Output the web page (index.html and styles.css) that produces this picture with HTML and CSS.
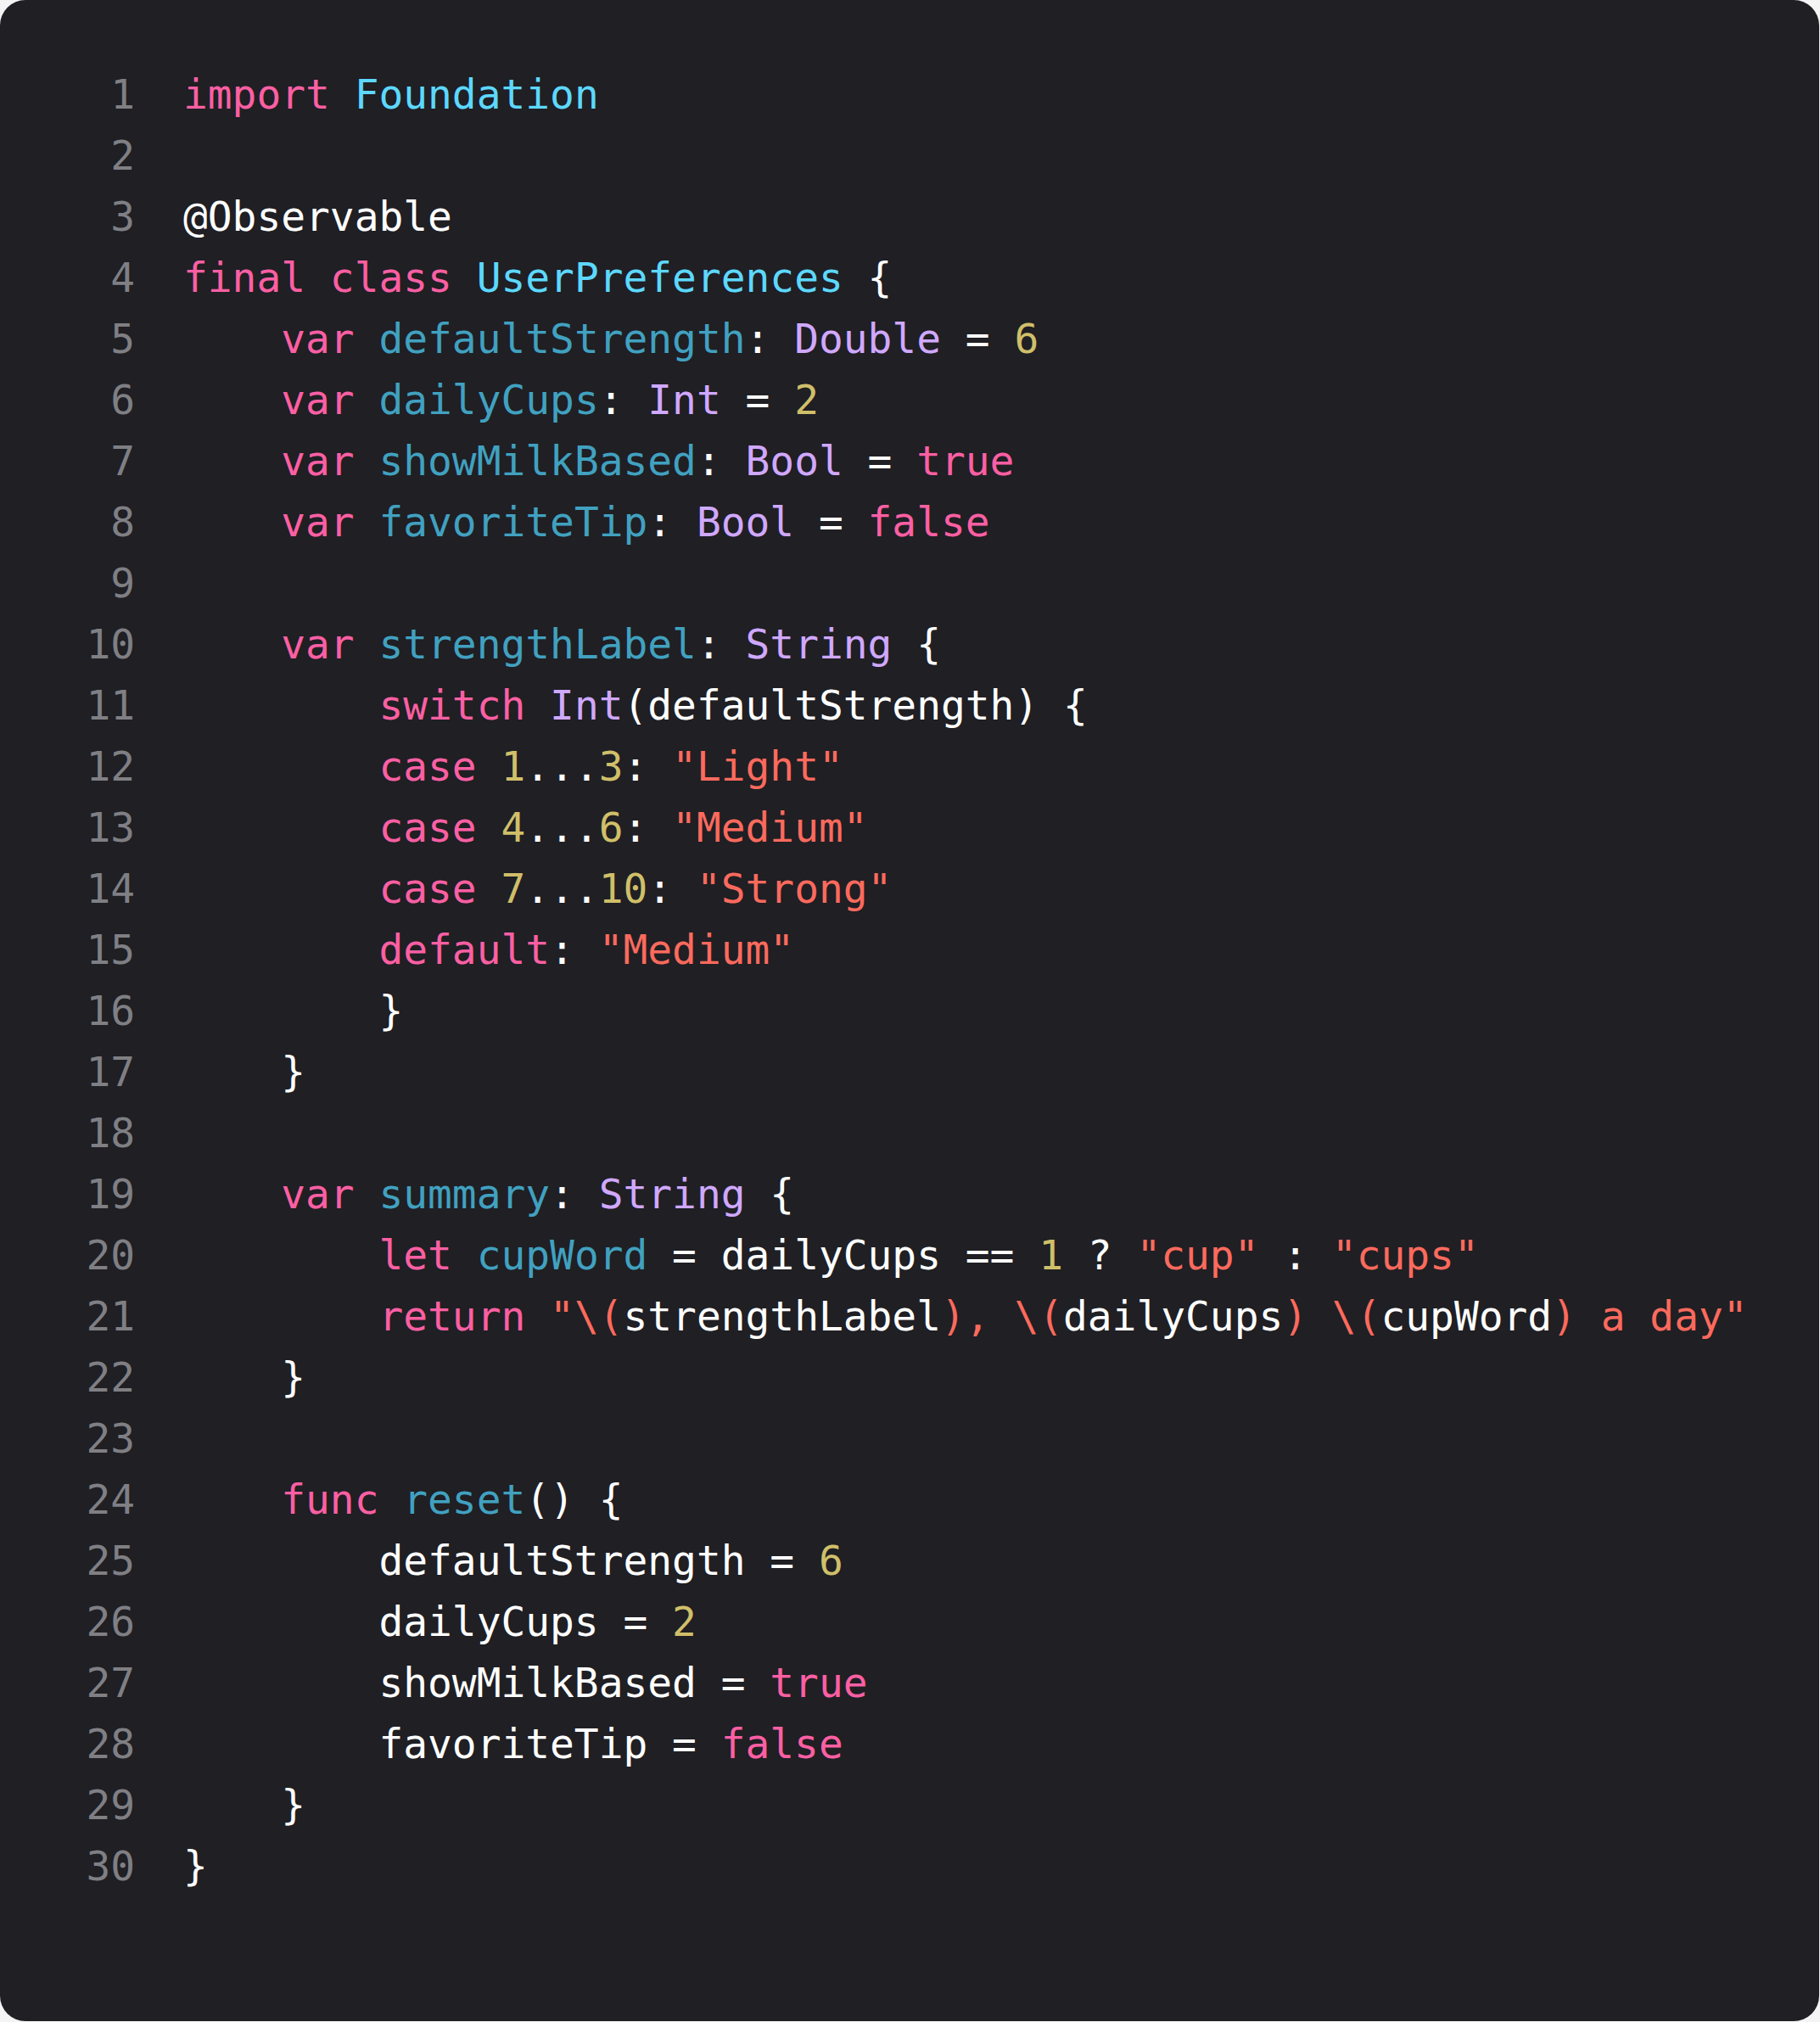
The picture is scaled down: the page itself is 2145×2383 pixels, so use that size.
FILE: index.html
```html
<!DOCTYPE html>
<html lang="en">
<head>
<meta charset="utf-8">
<title>UserPreferences.swift</title>
<link rel="stylesheet" href="styles.css">
</head>
<body>
<div class="card">
<div class="code">
<div class="row"><span class="ln">1</span><span class="src"><span class="kw">import</span> <span class="decl">Foundation</span></span></div>
<div class="row"><span class="ln">2</span><span class="src"></span></div>
<div class="row"><span class="ln">3</span><span class="src">@Observable</span></div>
<div class="row"><span class="ln">4</span><span class="src"><span class="kw">final</span> <span class="kw">class</span> <span class="decl">UserPreferences</span> {</span></div>
<div class="row"><span class="ln">5</span><span class="src">    <span class="kw">var</span> <span class="prop">defaultStrength</span>: <span class="type">Double</span> = <span class="num">6</span></span></div>
<div class="row"><span class="ln">6</span><span class="src">    <span class="kw">var</span> <span class="prop">dailyCups</span>: <span class="type">Int</span> = <span class="num">2</span></span></div>
<div class="row"><span class="ln">7</span><span class="src">    <span class="kw">var</span> <span class="prop">showMilkBased</span>: <span class="type">Bool</span> = <span class="kw">true</span></span></div>
<div class="row"><span class="ln">8</span><span class="src">    <span class="kw">var</span> <span class="prop">favoriteTip</span>: <span class="type">Bool</span> = <span class="kw">false</span></span></div>
<div class="row"><span class="ln">9</span><span class="src"></span></div>
<div class="row"><span class="ln">10</span><span class="src">    <span class="kw">var</span> <span class="prop">strengthLabel</span>: <span class="type">String</span> {</span></div>
<div class="row"><span class="ln">11</span><span class="src">        <span class="kw">switch</span> <span class="type">Int</span>(defaultStrength) {</span></div>
<div class="row"><span class="ln">12</span><span class="src">        <span class="kw">case</span> <span class="num">1</span>...<span class="num">3</span>: <span class="str">"Light"</span></span></div>
<div class="row"><span class="ln">13</span><span class="src">        <span class="kw">case</span> <span class="num">4</span>...<span class="num">6</span>: <span class="str">"Medium"</span></span></div>
<div class="row"><span class="ln">14</span><span class="src">        <span class="kw">case</span> <span class="num">7</span>...<span class="num">10</span>: <span class="str">"Strong"</span></span></div>
<div class="row"><span class="ln">15</span><span class="src">        <span class="kw">default</span>: <span class="str">"Medium"</span></span></div>
<div class="row"><span class="ln">16</span><span class="src">        }</span></div>
<div class="row"><span class="ln">17</span><span class="src">    }</span></div>
<div class="row"><span class="ln">18</span><span class="src"></span></div>
<div class="row"><span class="ln">19</span><span class="src">    <span class="kw">var</span> <span class="prop">summary</span>: <span class="type">String</span> {</span></div>
<div class="row"><span class="ln">20</span><span class="src">        <span class="kw">let</span> <span class="prop">cupWord</span> = dailyCups == <span class="num">1</span> ? <span class="str">"cup"</span> : <span class="str">"cups"</span></span></div>
<div class="row"><span class="ln">21</span><span class="src">        <span class="kw">return</span> <span class="str">"\(</span>strengthLabel<span class="str">), \(</span>dailyCups<span class="str">) \(</span>cupWord<span class="str">) a day"</span></span></div>
<div class="row"><span class="ln">22</span><span class="src">    }</span></div>
<div class="row"><span class="ln">23</span><span class="src"></span></div>
<div class="row"><span class="ln">24</span><span class="src">    <span class="kw">func</span> <span class="prop">reset</span>() {</span></div>
<div class="row"><span class="ln">25</span><span class="src">        defaultStrength = <span class="num">6</span></span></div>
<div class="row"><span class="ln">26</span><span class="src">        dailyCups = <span class="num">2</span></span></div>
<div class="row"><span class="ln">27</span><span class="src">        showMilkBased = <span class="kw">true</span></span></div>
<div class="row"><span class="ln">28</span><span class="src">        favoriteTip = <span class="kw">false</span></span></div>
<div class="row"><span class="ln">29</span><span class="src">    }</span></div>
<div class="row"><span class="ln">30</span><span class="src">}</span></div>
</div>
</div>
</body>
</html>
```
FILE: styles.css
```css
html, body {
  margin: 0;
  padding: 0;
  background: #f4f4f5;
}

.card {
  box-sizing: border-box;
  width: 2144px;
  height: 2382px;
  background: #1f1f24;
  border-radius: 30px;
  padding: 76px 0 0 101px;
  overflow: hidden;
}

.code {
  display: flex;
  flex-direction: column;
  font-family: "DejaVu Sans Mono", "Liberation Mono", monospace;
  font-size: 47.85px;
  line-height: 72px;
  color: #ffffff;
}

.row {
  display: flex;
  height: 72px;
}

.ln {
  width: 58px;
  text-align: right;
  color: #7f7f84;
  flex: none;
}

.src {
  margin-left: 57px;
  white-space: pre;
}

.kw { color: #fc5fa3; }
.decl { color: #5dd8ff; }
.prop { color: #41a1c0; }
.type { color: #d0a8ff; }
.num { color: #d0bf69; }
.str { color: #fc6a5d; }
```
